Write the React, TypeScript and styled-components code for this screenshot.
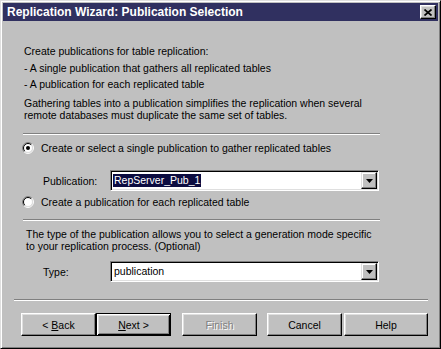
import React from "react";
import styled, { createGlobalStyle, css } from "styled-components";

const Global = createGlobalStyle`
  html, body { margin: 0; padding: 0; background: #c0c0c0; }
  body { font-family: "Liberation Sans", Arial, sans-serif; }
  * { box-sizing: border-box; }
`;

const FONT = `"Liberation Sans", Arial, sans-serif`;

const Window = styled.div`
  width: 441px;
  height: 349px;
  background: #c0c0c0;
  border: 1px solid;
  border-color: #dfdfdf #000 #000 #dfdfdf;
  box-shadow: inset 1px 1px #fff, inset -1px -1px #808080;
  padding: 2px;
  display: flex;
  flex-direction: column;
  font-family: ${FONT};
  font-size: 10.5px;
  color: #000;
`;

const TitleBar = styled.div`
  height: 18px;
  flex: none;
  background: #303060;
  display: flex;
  align-items: center;
  justify-content: space-between;
  padding: 0 2px 0 4px;
`;

const TitleText = styled.span`
  color: #fff;
  font-weight: bold;
  font-size: 12px;
  line-height: 14px;
  white-space: nowrap;
`;

const CloseButton = styled.button`
  width: 16px;
  height: 14px;
  padding: 0;
  background: #c0c0c0;
  border: 1px solid;
  border-color: #fff #000 #000 #fff;
  box-shadow: inset -1px -1px #808080, inset 1px 1px #dfdfdf;
  display: flex;
  align-items: center;
  justify-content: center;
`;

const Body = styled.div`
  flex: 1;
  display: flex;
  flex-direction: column;
  padding: 0 10px 0 11px;
`;

const Section = styled.div`
  width: 357px;
  margin-left: 9px;
  display: flex;
  flex-direction: column;
`;

const Line = styled.p<{ $gap: number; $indent?: number }>`
  margin: ${(p) => p.$gap}px 0 0 ${(p) => p.$indent ?? 1}px;
  line-height: 12px;
  white-space: nowrap;
`;

const Separator = styled.div<{ $gap: number }>`
  height: 2px;
  flex: none;
  margin-top: ${(p) => p.$gap}px;
  border-top: 1px solid #808080;
  border-bottom: 1px solid #fff;
`;

const OptionRow = styled.label<{ $gap: number }>`
  display: flex;
  align-items: center;
  gap: 7px;
  height: 12px;
  margin: ${(p) => p.$gap}px 0 0 -1px;
  line-height: 12px;
  white-space: nowrap;
`;

const FieldRow = styled.div<{ $gap: number }>`
  display: flex;
  align-items: center;
  margin-top: ${(p) => p.$gap}px;
  padding-left: 20px;
`;

const FieldLabel = styled.span`
  width: 67px;
  flex: none;
  line-height: 12px;
`;

const Combo = styled.div`
  width: 269px;
  height: 21px;
  background: #fff;
  border: 1px solid;
  border-color: #808080 #fff #fff #808080;
  box-shadow: inset 1px 1px #000, inset -1px -1px #dfdfdf;
  padding: 1px;
  display: flex;
  align-items: center;
`;

const ComboValue = styled.div`
  flex: 1;
  display: flex;
  align-items: center;
  padding-left: 1px;
`;

const ComboText = styled.span<{ $selected?: boolean }>`
  line-height: 13px;
  padding: 0 1px;
  white-space: nowrap;
  ${(p) =>
    p.$selected &&
    css`
      background: #0c0c40;
      color: #fff;
    `}
`;

const DropButton = styled.div`
  width: 16px;
  height: 17px;
  flex: none;
  background: #c0c0c0;
  border: 1px solid;
  border-color: #dfdfdf #000 #000 #dfdfdf;
  box-shadow: inset -1px -1px #808080, inset 1px 1px #fff;
  display: flex;
  align-items: center;
  justify-content: center;
`;

const ButtonRow = styled.div`
  display: flex;
  margin-top: 12px;
  padding-left: 7px;
`;

const Button = styled.button<{ $w?: number; $gap?: number; $default?: boolean; $disabled?: boolean }>`
  width: ${(p) => p.$w ?? 75}px;
  height: 23px;
  margin-left: ${(p) => p.$gap ?? 0}px;
  padding: 0;
  background: #c0c0c0;
  font-family: ${FONT};
  font-size: 10.5px;
  color: #000;
  border: 1px solid;
  border-color: #fff #000 #000 #fff;
  box-shadow: inset -1px -1px #808080, inset 1px 1px #dfdfdf;
  display: flex;
  align-items: center;
  justify-content: center;
  ${(p) =>
    p.$default &&
    css`
      border-color: #000;
      box-shadow: inset 1px 1px #fff, inset -1px -1px #000, inset 2px 2px #dfdfdf,
        inset -2px -2px #808080;
    `}
  ${(p) =>
    p.$disabled &&
    css`
      color: #808080;
      text-shadow: 1px 1px #fff;
    `}
`;

const Radio = ({ checked }: { checked?: boolean }) => (
  <svg width="12" height="12" viewBox="0 0 12 12">
    <circle cx="6" cy="6" r="4.5" fill="#fff" />
    <path d="M2.111 9.889 A5.5 5.5 0 0 1 9.889 2.111" stroke="#808080" fill="none" />
    <path d="M9.889 2.111 A5.5 5.5 0 0 1 2.111 9.889" stroke="#fff" fill="none" />
    <path d="M2.818 9.182 A4.5 4.5 0 0 1 9.182 2.818" stroke="#000" fill="none" />
    <path d="M9.182 2.818 A4.5 4.5 0 0 1 2.818 9.182" stroke="#dfdfdf" fill="none" />
    {checked && <circle cx="6" cy="6" r="2" fill="#000" />}
  </svg>
);

const CloseIcon = () => (
  <svg width="8" height="7" viewBox="0 0 8 7">
    <path d="M0.5 0.5 L7.5 6.5 M7.5 0.5 L0.5 6.5" stroke="#000" strokeWidth="1.7" />
  </svg>
);

const Arrow = () => (
  <svg width="7" height="4" viewBox="0 0 7 4">
    <polygon points="0,0 7,0 3.5,4" fill="#000" />
  </svg>
);

export default function App() {
  return (
    <>
      <Global />
      <Window>
        <TitleBar>
          <TitleText>Replication Wizard: Publication Selection</TitleText>
          <CloseButton aria-label="Close">
            <CloseIcon />
          </CloseButton>
        </TitleBar>
        <Body>
          <Section>
            <Line $gap={24}>Create publications for table replication:</Line>
            <Line $gap={5}>- A single publication that gathers all replicated tables</Line>
            <Line $gap={4}>- A publication for each replicated table</Line>
            <Line $gap={7}>
              Gathering tables into a publication simplifies the replication when several
              <br />
              remote databases must duplicate the same set of tables.
            </Line>
            <Separator $gap={12} />
            <OptionRow $gap={7}>
              <Radio checked />
              <span>Create or select a single publication to gather replicated tables</span>
            </OptionRow>
            <FieldRow $gap={16}>
              <FieldLabel>Publication:</FieldLabel>
              <Combo>
                <ComboValue>
                  <ComboText $selected>RepServer_Pub_1</ComboText>
                </ComboValue>
                <DropButton>
                  <Arrow />
                </DropButton>
              </Combo>
            </FieldRow>
            <OptionRow $gap={5}>
              <Radio />
              <span>Create a publication for each replicated table</span>
            </OptionRow>
            <Separator $gap={11} />
            <Line $gap={7} $indent={3}>
              The type of the publication allows you to select a generation mode specific
              <br />
              to your replication process. (Optional)
            </Line>
            <FieldRow $gap={9}>
              <FieldLabel>Type:</FieldLabel>
              <Combo>
                <ComboValue>
                  <ComboText>publication</ComboText>
                </ComboValue>
                <DropButton>
                  <Arrow />
                </DropButton>
              </Combo>
            </FieldRow>
          </Section>
          <Separator $gap={17} />
          <ButtonRow>
            <Button>
              &lt;&nbsp;<u>B</u>ack
            </Button>
            <Button $default>
              <u>N</u>ext &gt;
            </Button>
            <Button $gap={11} $disabled>
              Finish
            </Button>
            <Button $gap={10}>Cancel</Button>
            <Button $gap={2} $w={84}>
              Help
            </Button>
          </ButtonRow>
        </Body>
      </Window>
    </>
  );
}
